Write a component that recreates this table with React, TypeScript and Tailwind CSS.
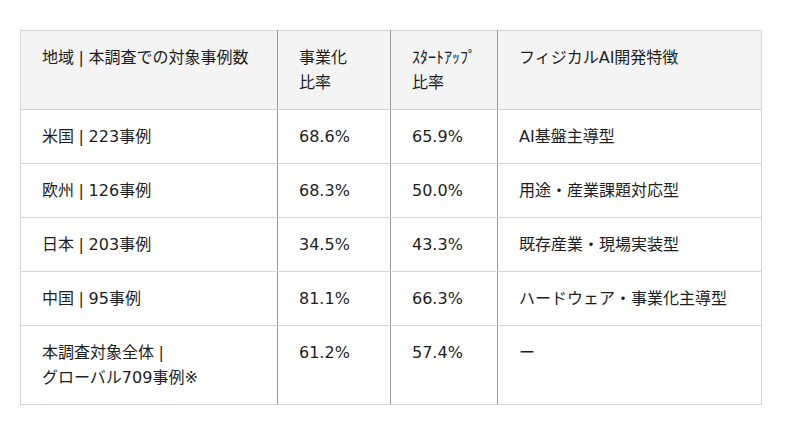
import React from 'react';

const rows = [
  { region: '米国', count: '223事例', biz: '68.6%', startup: '65.9%', feature: 'AI基盤主導型' },
  { region: '欧州', count: '126事例', biz: '68.3%', startup: '50.0%', feature: '用途・産業課題対応型' },
  { region: '日本', count: '203事例', biz: '34.5%', startup: '43.3%', feature: '既存産業・現場実装型' },
  { region: '中国', count: '95事例', biz: '81.1%', startup: '66.3%', feature: 'ハードウェア・事業化主導型' },
];

const cell = 'px-[21px] py-[14px] align-top text-left font-normal whitespace-nowrap border-b border-[#d4d4d4]';
const inner = 'border-l border-l-[#9a9a9a]';

// separator bar taking a full-width slot, like the wide ｜ in the source
const Bar = () => <span className="px-[4.6px]">|</span>;

export default function App() {
  return (
    <div className="w-[800px] h-[435px] bg-white pt-[30px] pl-[20px]" style={{ fontFamily: '"DejaVu Sans", "Noto Sans CJK JP", sans-serif' }}>
      <table className="w-[741px] table-fixed border-collapse border border-[#d4d4d4] text-[16px] leading-[25px] text-[#1e1e1e]">
        <colgroup>
          <col className="w-[257px]" />
          <col className="w-[113px]" />
          <col className="w-[107px]" />
          <col className="w-[264px]" />
        </colgroup>
        <thead>
          <tr className="bg-[#f4f4f4]">
            <th className={cell}>地域<Bar />本調査での対象事例数</th>
            <th className={`${cell} ${inner}`}>事業化<br />比率</th>
            <th className={`${cell} ${inner}`}>ｽﾀｰﾄｱｯﾌﾟ<br />比率</th>
            <th className={`${cell} ${inner}`}>フィジカルAI開発特徴</th>
          </tr>
        </thead>
        <tbody>
          {rows.map((r) => (
            <tr key={r.region}>
              <td className={cell}>{r.region}<Bar />{r.count}</td>
              <td className={`${cell} ${inner}`}>{r.biz}</td>
              <td className={`${cell} ${inner}`}>{r.startup}</td>
              <td className={`${cell} ${inner}`}>{r.feature}</td>
            </tr>
          ))}
          <tr>
            <td className={cell}>本調査対象全体<Bar /><br />グローバル709事例※</td>
            <td className={`${cell} ${inner}`}>61.2%</td>
            <td className={`${cell} ${inner}`}>57.4%</td>
            <td className={`${cell} ${inner}`}>ー</td>
          </tr>
        </tbody>
      </table>
    </div>
  );
}
